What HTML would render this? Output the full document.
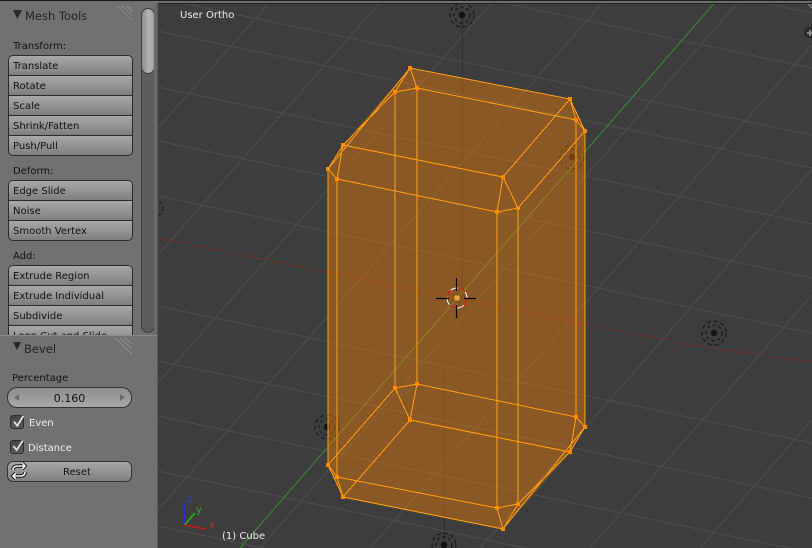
<!DOCTYPE html>
<html><head><meta charset="utf-8">
<style>
html,body{margin:0;padding:0;background:#3d3d3d;width:812px;height:548px;overflow:hidden}
#r{position:relative;width:812px;height:548px;overflow:hidden;background:#3d3d3d;font-family:"DejaVu Sans",sans-serif;font-size:10px;color:#111}
#r svg{position:absolute;left:0;top:0;display:block}
.p{position:absolute;left:0;width:158px;background:#717171;overflow:hidden}
.t{position:absolute;white-space:nowrap;line-height:14px}
.g{position:absolute;left:8px;width:123px;border:1px solid #2b2b2b;border-radius:5px;overflow:hidden;background:#333}
.b{height:19px;line-height:21px;padding-left:4px;background:linear-gradient(#a8a8a8,#7f7f7f);border-bottom:1px solid #2b2b2b;white-space:nowrap}
.b:last-child{border-bottom:0}
.f{position:absolute;left:7px;width:123px;height:19px;border:1px solid #333;background:linear-gradient(#8c8c8c,#a8a8a8)}
.c{position:absolute;left:10px;width:12px;height:12px;border:1px solid #2c2c2c;border-radius:3px;background:linear-gradient(#444,#5a5a5a)}
</style></head><body>
<div id="r">
<svg width="812" height="548" viewBox="0 0 812 548">
<g fill="none" stroke="#4e4e4e" stroke-width="1">
<path d="M158 -2L812 135M158 31L812 168M158 87L812 224M158 141L812 278M158 196L812 333M158 306L812 443M158 361L812 498M158 416L812 553M158 471L812 608M158 526L812 663M158 -70L812 68M158 -125L812 13"/>
<path d="M158 128L272 0M158 255L382 0M158 383L494 0M158 510L605 0M260 548L740 0M370 548L812 45M480 548L812 169M590 548L812 295M700 548L812 420"/>
</g>
<path d="M158 238L690 345L812 362" fill="none" stroke="#6a3232" stroke-width="1"/>
<path d="M240 548L717 0" fill="none" stroke="#3c8a38" stroke-width="1"/>
<path d="M462.500 15V300M444.500 370V543" fill="none" stroke="#000" stroke-opacity=".25" stroke-width="1"/>
<g id="lamps" fill="none" stroke="#111" stroke-width="1">
<g transform="translate(462,15)"><circle r="12" stroke-dasharray="4 3"/><circle r="8" stroke-dasharray="3 3"/><circle r="3.2" fill="#111" stroke="none"/></g>
<g transform="translate(714,333)"><circle r="12" stroke-dasharray="4 3"/><circle r="8" stroke-dasharray="3 3"/><circle r="3.2" fill="#111" stroke="none"/></g>
<g transform="translate(327,427)"><circle r="12" stroke-dasharray="4 3"/><circle r="8" stroke-dasharray="3 3"/><circle r="3.2" fill="#111" stroke="none"/></g>
<g transform="translate(444,545)"><circle r="12" stroke-dasharray="4 3"/><circle r="8" stroke-dasharray="3 3"/><circle r="3.2" fill="#111" stroke="none"/></g>
<g transform="translate(572,157)"><circle r="12" stroke-dasharray="4 3"/><circle r="8" stroke-dasharray="3 3"/><circle r="3.2" fill="#111" stroke="none"/></g>
<g transform="translate(155,208)"><circle r="8" stroke-dasharray="3 3"/></g>
</g>
<polygon points="410,68 570,99 585,131 585,427 570,452 503,529 343,497 328,465 328,169 343,145" fill="#ff8200" fill-opacity=".4"/>
<g fill="none" stroke="#ffa014" stroke-width="1" shape-rendering="crispEdges">
<path d="M410 68L570 99L585 131L576 120L570 99M410 68L417 88L395 92L410 68M417 88L576 120M395 92L343 145M410 68L328 169L343 145L337 179L328 169M343 145L503 177L518 208L497 212L503 177M337 179L497 212M518 208L585 131M503 177L570 99"/>
<path d="M328 169V465M337 179V477M395 92V388M417 88V384M497 212V508M518 208V504M576 120V417M585 131V427"/>
<path d="M395 388L417 384L410 420L395 388M417 384L576 417L585 427L570 452L576 417M410 420L570 452M395 388L328 465L337 477L343 497L328 465M410 420L343 497M337 477L497 508L518 504L503 529L497 508M343 497L503 529L585 427M518 504L570 452"/>
</g>
<g fill="#ff8c00">
<path d="M408 66h4v4h-4zM568 97h4v4h-4zM583 129h4v4h-4zM574 118h4v4h-4zM415 86h4v4h-4zM393 90h4v4h-4zM341 143h4v4h-4zM326 167h4v4h-4zM335 177h4v4h-4zM501 175h4v4h-4zM516 206h4v4h-4zM495 210h4v4h-4z"/>
<path d="M393 386h4v4h-4zM415 382h4v4h-4zM408 418h4v4h-4zM574 415h4v4h-4zM583 425h4v4h-4zM568 450h4v4h-4zM326 463h4v4h-4zM335 475h4v4h-4zM341 495h4v4h-4zM495 506h4v4h-4zM516 502h4v4h-4zM501 527h4v4h-4z"/>
</g>
<circle cx="457" cy="298" r="10" fill="none" stroke="#fff" stroke-width="1"/>
<circle cx="457" cy="298" r="10" fill="none" stroke="#d01818" stroke-width="1.2" stroke-dasharray="8 8"/>
<path d="M436 298.500H449M464 298.500H476M456.500 278V291M456.500 305V318" stroke="#000" stroke-width="1.200" fill="none"/>
<rect x="454" y="295" width="6" height="6" fill="#f0a040" stroke="#5c3a10" stroke-width=".6"/>
<path d="M184.500 525V503" stroke="#2a2ad0" stroke-width="1.500"/>
<path d="M184.500 525L195 513" stroke="#20c020" stroke-width="1.500"/>
<path d="M184.500 525L206 529" stroke="#c81818" stroke-width="1.500"/>
<text x="187" y="502" font-family="DejaVu Sans,sans-serif" font-size="9.500" fill="#3a3ad0">z</text>
<text x="196" y="513" font-family="DejaVu Sans,sans-serif" font-size="9.500" fill="#30b030">y</text>
<text x="209" y="528" font-family="DejaVu Sans,sans-serif" font-size="9.500" fill="#c03030">x</text>
<path d="M812 27h-3a5 5 0 0 0 -5 5v1a5 5 0 0 0 5 5h3z" fill="#2b2b2b"/>
<path d="M807 33h5M810 30v6" stroke="#888" stroke-width="2"/>
<path d="M807 3L812 8M810 3L812 5" stroke="#999" stroke-width="1"/>
</svg>
<div style="position:absolute;left:0;top:0;width:812px;height:1px;background:#1c1c1c"></div>
<div style="position:absolute;left:0;top:1px;width:812px;height:2px;background:#6e6e6e"></div>
<div style="position:absolute;left:158px;top:3px;width:654px;height:1px;background:#222"></div>
<div class="t" style="left:180px;top:9px;color:#eee">User Ortho</div>
<div class="t" style="left:222px;top:530px;color:#eee">(1) Cube</div>

<div class="p" style="top:3px;height:332px">
<svg width="158" height="332">
<path d="M13 7h9l-4.500 9z" fill="#2a2a2a"/>
<path d="M117 3L132 18M122 3L132 13M127 3L132 8" stroke="#8f8f8f" stroke-width="1" fill="none"/>
<path d="M118 5L132 19M123 5L132 14" stroke="#5a5a5a" stroke-width=".6" fill="none"/>
</svg>
<div style="position:absolute;left:141px;top:5px;width:12px;height:323px;border-radius:7px;background:#5d5d5d;border:1px solid #3d3d3d"></div>
<div style="position:absolute;left:141px;top:5px;width:12px;height:64px;border-radius:7px;background:linear-gradient(90deg,#8e8e8e,#b4b4b4 60%,#a0a0a0);border:1px solid #3d3d3d"></div>
<div style="position:absolute;left:154px;top:0;width:3px;height:332px;background:#6a6a6a"></div>
</div>
<div class="t" style="left:25px;top:9px;font-size:11.500px;color:#222">Mesh Tools</div>
<div class="t" style="left:13px;top:40px">Transform:</div>
<div class="g" style="top:55px"><div class="b">Translate</div><div class="b">Rotate</div><div class="b">Scale</div><div class="b">Shrink/Fatten</div><div class="b">Push/Pull</div></div>
<div class="t" style="left:13px;top:165px">Deform:</div>
<div class="g" style="top:180px"><div class="b">Edge Slide</div><div class="b">Noise</div><div class="b">Smooth Vertex</div></div>
<div class="t" style="left:13px;top:250px">Add:</div>
<div class="g" style="top:265px;border-bottom:0;border-radius:5px 5px 0 0;height:70px"><div class="b">Extrude Region</div><div class="b">Extrude Individual</div><div class="b">Subdivide</div><div class="b" style="border-bottom:0">Loop Cut and Slide</div></div>

<div class="p" style="top:335px;height:213px;border-top:1px solid #8a8a8a;box-sizing:border-box">
<svg width="158" height="212">
<path d="M13 6h8l-4 8z" fill="#2a2a2a"/>
<path d="M115 2L132 18M120 2L132 13M125 2L132 8" stroke="#8f8f8f" stroke-width="1" fill="none"/>
</svg>
</div>
<div style="position:absolute;left:157px;top:3px;width:1px;height:545px;background:#5a5a5a"></div>
<div class="t" style="left:24px;top:342px;font-size:11.500px;color:#222">Bevel</div>
<div class="t" style="left:12px;top:372px">Percentage</div>
<div class="f" style="top:387px;border-radius:10px;text-align:center;line-height:21px;font-size:11px;color:#111">0.160</div>
<div class="f" style="top:461px;border-radius:6px;text-align:center;line-height:21px;background:linear-gradient(#a8a8a8,#7f7f7f);text-indent:15px">Reset</div>
<div class="c" style="top:415px"></div>
<div class="c" style="top:440px"></div>
<svg width="812" height="548">
<path d="M19 394v7l-5-3.500zM120 394v7l5-3.500z" fill="#6a6a6a"/>
<path d="M14 421.700l3.300 4 6-9.700M13.300 446l3.400 4 6-9.300" stroke="#e8e8e8" stroke-width="1.700" fill="none"/>
<path d="M13 470c0-3 2-4 5-4h7M22 463l3 3-3 3M25 472c0 3-2 4-5 4h-7M16 473l-3 3 3 3" stroke="#111" stroke-width="3.400" fill="none"/>
<path d="M13 470c0-3 2-4 5-4h7M22 463l3 3-3 3M25 472c0 3-2 4-5 4h-7M16 473l-3 3 3 3" stroke="#f2f2f2" stroke-width="1.600" fill="none"/>
</svg>
<div class="t" style="left:29px;top:417px;color:#eee">Even</div>
<div class="t" style="left:28px;top:442px;color:#eee">Distance</div>
</div>
</body></html>
